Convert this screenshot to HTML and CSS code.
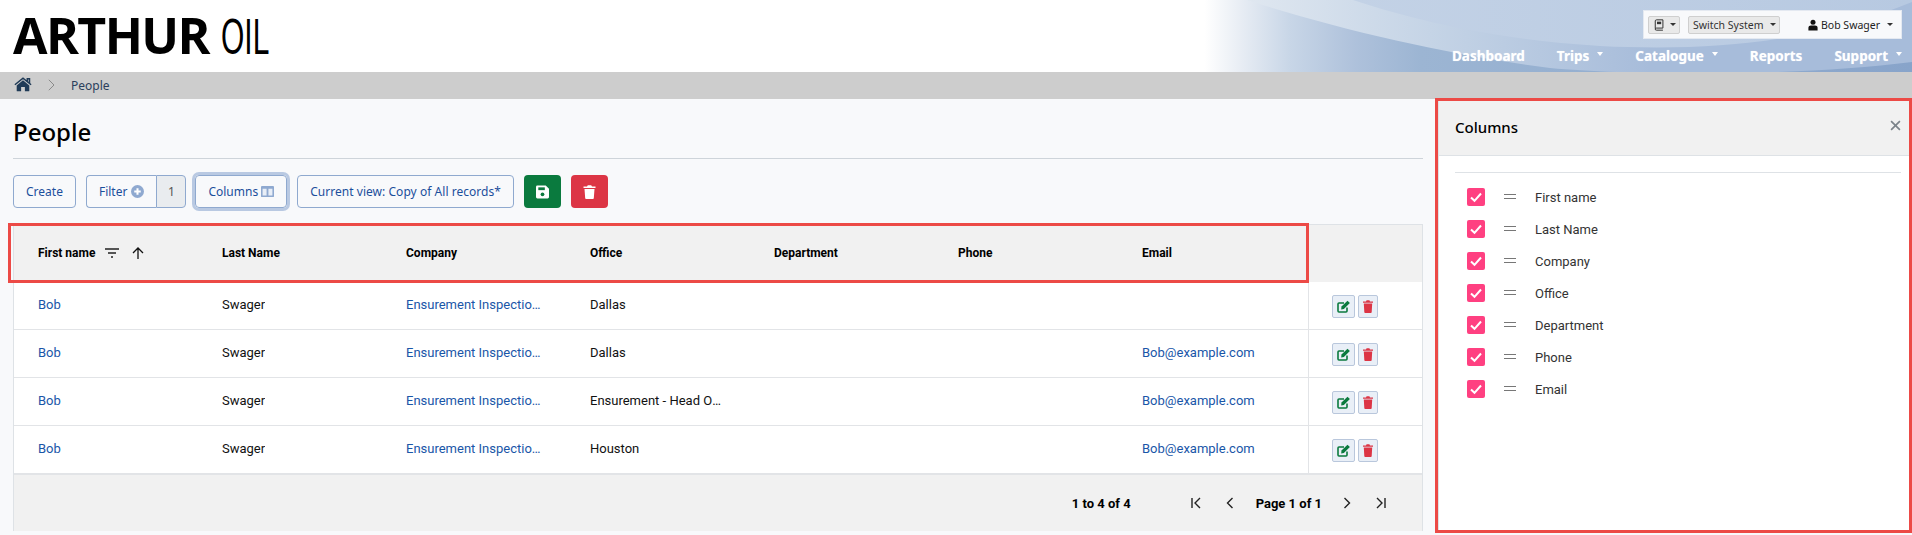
FILE: index.html
```html
<!DOCTYPE html>
<html lang="en">
<head>
<meta charset="utf-8">
<title>People</title>
<link rel="stylesheet" href="styles.css">
</head>
<body>
<header class="site-header">
  <svg class="header-art" viewBox="1190 0 722 72" preserveAspectRatio="none" aria-hidden="true">
    <defs>
      <linearGradient id="baseG" gradientUnits="userSpaceOnUse" x1="1190" y1="0" x2="1912" y2="0">
        <stop offset="0" stop-color="#fff" stop-opacity="0"/>
        <stop offset=".02" stop-color="#fff"/>
        <stop offset=".07" stop-color="#e8edf4"/>
        <stop offset=".138" stop-color="#c8d6e7"/>
        <stop offset=".23" stop-color="#aec1db"/>
        <stop offset=".32" stop-color="#9cb5d3"/>
        <stop offset="1" stop-color="#88a4ca"/>
      </linearGradient>
      <linearGradient id="bandG" gradientUnits="userSpaceOnUse" x1="1250" y1="0" x2="1650" y2="0">
        <stop offset="0" stop-color="#dfe7f0"/>
        <stop offset=".45" stop-color="#c5d4e6"/>
        <stop offset="1" stop-color="#a7bcda"/>
      </linearGradient>
      <linearGradient id="topG" gradientUnits="userSpaceOnUse" x1="1350" y1="0" x2="1912" y2="0">
        <stop offset="0" stop-color="#c3d2e6"/>
        <stop offset="1" stop-color="#b7c9e1"/>
      </linearGradient>
    </defs>
    <rect x="1190" y="0" width="722" height="72" fill="url(#baseG)"/>
    <path d="M1247 0C1340 30 1450 55 1550 68C1640 76 1800 76 1912 62V0Z" fill="url(#bandG)"/>
    <path d="M1353 0C1420 22 1500 40 1600 46C1720 52 1820 40 1912 2V0Z" fill="url(#topG)"/>
  </svg>
  <div class="logo"><span class="logo-bold">ARTHUR</span><span class="logo-light">OIL</span></div>
  <div class="header-right">
    <div class="util-box">
      <button class="util-btn util-book">
        <svg class="i-book" viewBox="0 0 12 14"><path d="M1.500 11.500V2A1.500 1.500 0 0 1 3 .8h7.700v9.900H3a1.400 1.400 0 0 0-1.500 1.200 1.300 1.300 0 0 0 1.500 1.300h7.700" fill="none" stroke="#333" stroke-width="1.200"/><rect x="3.600" y="3" width="5" height="3" fill="#333"/></svg>
        <span class="caret-dark"></span>
      </button>
      <button class="util-btn util-switch">Switch System<span class="caret-dark"></span></button>
      <div class="util-user">
        <svg class="i-user" viewBox="0 0 12 13"><circle cx="6" cy="3.300" r="3" fill="#111"/><path d="M.5 13V9.800C.5 8 2 7 3.500 7h5c1.500 0 3 1 3 2.800V13Z" fill="#111"/></svg>
        <span>Bob Swager</span><span class="caret-dark caret-user"></span>
      </div>
    </div>
    <nav class="main-nav">
      <a>Dashboard</a>
      <a>Trips<span class="caret-light"></span></a>
      <a>Catalogue<span class="caret-light"></span></a>
      <a>Reports</a>
      <a>Support<span class="caret-light"></span></a>
    </nav>
  </div>
</header>

<div class="crumbs">
  <svg class="i-home" viewBox="0 0 20 16"><path d="M10 3.300 3 9.100V15a.6.6 0 0 0 .6.6h4.300v-4.700h4.200v4.700h4.300a.6.6 0 0 0 .6-.6V9.100Z" fill="#1f3a56"/><path d="M1 8.300 10 1l9 7.300M14.800 4.500V1.600h2.400v4.900" fill="none" stroke="#1f3a56" stroke-width="1.700"/></svg>
  <svg class="i-sep" viewBox="0 0 7 12"><path d="M.8.800 6 6 .8 11.200" fill="none" stroke="#8a8a8a" stroke-width="1"/></svg>
  <span>People</span>
</div>

<div class="workspace">
  <main class="content">
    <h1 class="page-title">People</h1>
    <div class="toolbar">
      <button class="btn">Create</button>
      <div class="btn-group">
        <button class="btn btn-left">Filter
          <svg class="i-btn" viewBox="0 0 14 14"><circle cx="7" cy="7" r="7" fill="#8fa9d0"/><path d="M7 3.500v7M3.500 7h7" stroke="#fff" stroke-width="2.200"/></svg>
        </button>
        <span class="btn-count">1</span>
      </div>
      <button class="btn btn-focus">Columns
        <svg class="i-btn" viewBox="0 0 14 12"><path d="M1 0h12a1 1 0 0 1 1 1v10a1 1 0 0 1-1 1H1a1 1 0 0 1-1-1V1a1 1 0 0 1 1-1Z" fill="#8fa9d0"/><path d="M1.700 3h4.300v7.300H1.700zM8 3h4.300v7.300H8z" fill="#e8eef7"/></svg>
      </button>
      <button class="btn btn-view">Current view: Copy of All records*</button>
      <button class="btn btn-save" aria-label="Save">
        <svg class="i-solid" viewBox="0 0 14 14"><path d="M1.500 0h9L14 3.500v9a1.500 1.500 0 0 1-1.500 1.500h-11A1.500 1.500 0 0 1 0 12.500v-11A1.500 1.500 0 0 1 1.500 0Z" fill="#fff"/><rect x="2.500" y="2" width="7" height="3" fill="#0a7a3e"/><circle cx="7" cy="9.500" r="2" fill="#0a7a3e"/></svg>
      </button>
      <button class="btn btn-del" aria-label="Delete">
        <svg class="i-solid" viewBox="0 0 12 14"><path d="M0 1.500h3.500L4.300.2h3.400l.8 1.300H12V3H0ZM1 4h10l-.7 9.200a.9.9 0 0 1-.9.800H2.600a.9.9 0 0 1-.9-.8Z" fill="#fff"/></svg>
      </button>
    </div>

    <div class="grid">
      <div class="grid-row grid-head">
        <div class="cell cell-first">First name
          <svg class="i-filter" viewBox="0 0 14 10"><path d="M0 1h14M3 5h8M6 9h2" stroke="#222" stroke-width="1.500"/></svg>
          <svg class="i-arrow" viewBox="0 0 12 12"><path d="M6 12V1M1 6l5-5 5 5" fill="none" stroke="#111" stroke-width="1.300"/></svg>
        </div>
        <div class="cell">Last Name</div>
        <div class="cell">Company</div>
        <div class="cell">Office</div>
        <div class="cell">Department</div>
        <div class="cell">Phone</div>
        <div class="cell">Email</div>
        <div class="cell cell-actions"></div>
      </div>

      <div class="grid-row">
        <div class="cell"><a>Bob</a></div>
        <div class="cell"><span>Swager</span></div>
        <div class="cell"><a>Ensurement Inspections Ltd</a></div>
        <div class="cell"><span>Dallas</span></div>
        <div class="cell"></div>
        <div class="cell"></div>
        <div class="cell"></div>
        <div class="cell cell-actions">
          <button class="mini mini-edit" aria-label="Edit"><svg viewBox="0 0 14 13"><path d="M10 7.500V11a1 1 0 0 1-1 1H2a1 1 0 0 1-1-1V4a1 1 0 0 1 1-1h5" fill="none" stroke="#0a7a3e" stroke-width="1.600"/><path d="M4.500 6.500 10.500.8l2.400 2.300-6 5.900-2.700.4Z" fill="#0a7a3e"/></svg></button>
          <button class="mini mini-del" aria-label="Delete"><svg viewBox="0 0 10 13"><path d="M0 1.500h3L3.600.3h2.800L7 1.500h3v1.300H0ZM.8 3.600h8.400l-.5 8.500a.9.9 0 0 1-.9.900H2.200a.9.9 0 0 1-.9-.9Z" fill="#dc3545"/></svg></button>
        </div>
      </div>

      <div class="grid-row">
        <div class="cell"><a>Bob</a></div>
        <div class="cell"><span>Swager</span></div>
        <div class="cell"><a>Ensurement Inspections Ltd</a></div>
        <div class="cell"><span>Dallas</span></div>
        <div class="cell"></div>
        <div class="cell"></div>
        <div class="cell"><a>Bob@example.com</a></div>
        <div class="cell cell-actions">
          <button class="mini mini-edit" aria-label="Edit"><svg viewBox="0 0 14 13"><path d="M10 7.500V11a1 1 0 0 1-1 1H2a1 1 0 0 1-1-1V4a1 1 0 0 1 1-1h5" fill="none" stroke="#0a7a3e" stroke-width="1.600"/><path d="M4.500 6.500 10.500.8l2.400 2.300-6 5.900-2.700.4Z" fill="#0a7a3e"/></svg></button>
          <button class="mini mini-del" aria-label="Delete"><svg viewBox="0 0 10 13"><path d="M0 1.500h3L3.600.3h2.800L7 1.500h3v1.300H0ZM.8 3.600h8.400l-.5 8.500a.9.9 0 0 1-.9.900H2.200a.9.9 0 0 1-.9-.9Z" fill="#dc3545"/></svg></button>
        </div>
      </div>

      <div class="grid-row">
        <div class="cell"><a>Bob</a></div>
        <div class="cell"><span>Swager</span></div>
        <div class="cell"><a>Ensurement Inspections Ltd</a></div>
        <div class="cell"><span>Ensurement - Head Office</span></div>
        <div class="cell"></div>
        <div class="cell"></div>
        <div class="cell"><a>Bob@example.com</a></div>
        <div class="cell cell-actions">
          <button class="mini mini-edit" aria-label="Edit"><svg viewBox="0 0 14 13"><path d="M10 7.500V11a1 1 0 0 1-1 1H2a1 1 0 0 1-1-1V4a1 1 0 0 1 1-1h5" fill="none" stroke="#0a7a3e" stroke-width="1.600"/><path d="M4.500 6.500 10.500.8l2.400 2.300-6 5.900-2.700.4Z" fill="#0a7a3e"/></svg></button>
          <button class="mini mini-del" aria-label="Delete"><svg viewBox="0 0 10 13"><path d="M0 1.500h3L3.600.3h2.800L7 1.500h3v1.300H0ZM.8 3.600h8.400l-.5 8.500a.9.9 0 0 1-.9.900H2.200a.9.9 0 0 1-.9-.9Z" fill="#dc3545"/></svg></button>
        </div>
      </div>

      <div class="grid-row">
        <div class="cell"><a>Bob</a></div>
        <div class="cell"><span>Swager</span></div>
        <div class="cell"><a>Ensurement Inspections Ltd</a></div>
        <div class="cell"><span>Houston</span></div>
        <div class="cell"></div>
        <div class="cell"></div>
        <div class="cell"><a>Bob@example.com</a></div>
        <div class="cell cell-actions">
          <button class="mini mini-edit" aria-label="Edit"><svg viewBox="0 0 14 13"><path d="M10 7.500V11a1 1 0 0 1-1 1H2a1 1 0 0 1-1-1V4a1 1 0 0 1 1-1h5" fill="none" stroke="#0a7a3e" stroke-width="1.600"/><path d="M4.500 6.500 10.500.8l2.400 2.300-6 5.900-2.700.4Z" fill="#0a7a3e"/></svg></button>
          <button class="mini mini-del" aria-label="Delete"><svg viewBox="0 0 10 13"><path d="M0 1.500h3L3.600.3h2.800L7 1.500h3v1.300H0ZM.8 3.600h8.400l-.5 8.500a.9.9 0 0 1-.9.900H2.200a.9.9 0 0 1-.9-.9Z" fill="#dc3545"/></svg></button>
        </div>
      </div>

      <div class="grid-foot">
        <span class="foot-summary">1 to 4 of 4</span>
        <svg class="i-page" viewBox="0 0 10 12"><path d="M1 1v10M9 1 4 6l5 5" fill="none" stroke="#222" stroke-width="1.400"/></svg>
        <svg class="i-page" viewBox="0 0 10 12"><path d="M7.500 1 2.500 6l5 5" fill="none" stroke="#222" stroke-width="1.400"/></svg>
        <span class="foot-page">Page 1 of 1</span>
        <svg class="i-page" viewBox="0 0 10 12"><path d="M2.500 1l5 5-5 5" fill="none" stroke="#222" stroke-width="1.400"/></svg>
        <svg class="i-page" viewBox="0 0 10 12"><path d="M9 1v10M1 1l5 5-5 5" fill="none" stroke="#222" stroke-width="1.400"/></svg>
      </div>
      <div class="mark-head"></div>
    </div>
  </main>

  <aside class="panel">
    <div class="panel-head">
      <h2>Columns</h2>
      <svg class="i-close" viewBox="0 0 10 10"><path d="M1 1l8 8M9 1l-8 8" stroke="#7b838a" stroke-width="1.500"/></svg>
    </div>
    <div class="panel-body">
      <ul class="col-list">
        <li><span class="check"><svg viewBox="0 0 18 18"><path d="M4 9.500l3.500 3.300L14 5.500" fill="none" stroke="#fff" stroke-width="2"/></svg></span><span class="drag"></span>First name</li>
        <li><span class="check"><svg viewBox="0 0 18 18"><path d="M4 9.500l3.500 3.300L14 5.500" fill="none" stroke="#fff" stroke-width="2"/></svg></span><span class="drag"></span>Last Name</li>
        <li><span class="check"><svg viewBox="0 0 18 18"><path d="M4 9.500l3.500 3.300L14 5.500" fill="none" stroke="#fff" stroke-width="2"/></svg></span><span class="drag"></span>Company</li>
        <li><span class="check"><svg viewBox="0 0 18 18"><path d="M4 9.500l3.500 3.300L14 5.500" fill="none" stroke="#fff" stroke-width="2"/></svg></span><span class="drag"></span>Office</li>
        <li><span class="check"><svg viewBox="0 0 18 18"><path d="M4 9.500l3.500 3.300L14 5.500" fill="none" stroke="#fff" stroke-width="2"/></svg></span><span class="drag"></span>Department</li>
        <li><span class="check"><svg viewBox="0 0 18 18"><path d="M4 9.500l3.500 3.300L14 5.500" fill="none" stroke="#fff" stroke-width="2"/></svg></span><span class="drag"></span>Phone</li>
        <li><span class="check"><svg viewBox="0 0 18 18"><path d="M4 9.500l3.500 3.300L14 5.500" fill="none" stroke="#fff" stroke-width="2"/></svg></span><span class="drag"></span>Email</li>
      </ul>
    </div>
  </aside>
</div>
</body>
</html>
```
FILE: styles.css
```css
* { box-sizing: border-box; }
html, body { margin: 0; height: 535px; overflow: hidden; }
body { background: #f8f9fb; font-family: "Noto Sans", sans-serif; font-size: 12px; color: #212529; }
h1, h2, ul { margin: 0; padding: 0; }
button { font-family: inherit; }

.site-header { position: relative; height: 72px; background: #fff; display: flex; justify-content: space-between; }
.header-art { position: absolute; top: 0; right: 0; width: 722px; height: 72px; }
.logo { position: relative; padding-left: 13px; height: 72px; display: flex; align-items: baseline; line-height: 70px; color: #000; }
.logo-bold { font-family: "Open Sans", sans-serif; font-weight: 700; font-size: 50px; letter-spacing: -1.600px; }
.logo-light { display: inline-block; font-family: "Liberation Sans", sans-serif; font-size: 50px; margin-left: 12px; transform: scaleX(.6); transform-origin: left center; }

.header-right { position: relative; display: flex; flex-direction: column; align-items: flex-end; padding-right: 10px; }
.util-box { margin-top: 10px; width: 259px; height: 29px; background: #f8f9fb; border: 1px solid #e4e9f1; display: flex; align-items: center; padding-left: 4px; }
.util-btn { height: 18px; background: #e9e9e9; border: 1px solid #cfcfcf; border-radius: 2px; display: flex; align-items: center; padding: 0; font-size: 10.500px; color: #333; }
.util-book { width: 32px; justify-content: flex-start; padding-left: 5px; }
.i-book { width: 10px; height: 12px; }
.util-book .caret-dark { margin-left: 6px; }
.util-switch { width: 92px; margin-left: 8px; padding-left: 4px; }
.util-switch .caret-dark { margin-left: 7px; }
.util-user { display: flex; align-items: center; margin-left: 28px; font-size: 10.500px; color: #222; }
.i-user { width: 10px; height: 12px; margin-right: 3px; }
.caret-user { margin-left: 7px; }
.caret-dark { display: inline-block; border: 3px solid transparent; border-top: 3.500px solid #333; border-bottom: 0; }

.main-nav { height: 33px; display: flex; align-items: center; gap: 32px; }
.main-nav a { color: #fff; font-size: 13.500px; font-weight: 700; display: flex; align-items: center; text-shadow: 0 0 1px rgba(255,255,255,.6); }
.caret-light { display: inline-block; margin-left: 8px; margin-top: -3px; border: 3.500px solid transparent; border-top: 4px solid #fff; border-bottom: 0; }

.crumbs { height: 27px; background: #cdcdcd; display: flex; align-items: center; padding-left: 14px; color: #2b3f5c; }
.i-home { width: 18px; height: 15px; margin-top: -2px; }
.i-sep { width: 7px; height: 12px; margin-left: 16px; margin-top: -1px; }
.crumbs span { margin-left: 16px; }

.workspace { display: flex; height: 436px; }
.content { width: 1435px; padding: 0 12px 0 13px; }
.page-title { height: 60px; border-bottom: 1px solid #ced4da; font-size: 24px; font-weight: 500; line-height: 66px; color: #000; }

.toolbar { display: flex; height: 33px; margin-top: 16px; margin-bottom: 16px; gap: 10px; }
.btn { height: 33px; padding: 0 12px; border: 1px solid #8fa9cf; border-radius: 4px; background: transparent; color: #1c4f9c; font-size: 12px; display: flex; align-items: center; gap: 4px; white-space: nowrap; }
.btn-group { display: flex; }
.btn-left { border-radius: 4px 0 0 4px; border-right: 0; }
.btn-count { width: 30px; display: flex; align-items: center; justify-content: center; border: 1px solid #8fa9cf; border-radius: 0 4px 4px 0; background: #e9ecef; color: #555; }
.i-btn { width: 13px; height: 13px; }
.btn-focus { box-shadow: 0 0 0 3px #b9c9e2; gap: 3px; margin-left: -1px; }
.btn-view { letter-spacing: .04px; }
.btn-save, .btn-del { justify-content: center; border: 0; }
.btn-save { width: 37px; background: #0a7a3e; }
.btn-del { width: 37px; background: #dc3545; }
.i-solid { width: 13px; height: 14px; }

.grid { position: relative; width: 1410px; height: 307px; border: 1px solid #dee2e6; background: #fff; font-family: Roboto, sans-serif; font-size: 13px; color: #111; }
.grid-row { display: grid; grid-template-columns: repeat(6, 184px) 190px 1fr; height: 48px; border-bottom: 1px solid #e2e4e7; }
.grid-head { height: 57px; background: #f1f1f1; font-size: 12px; font-weight: 700; color: #000; border-bottom: 0; }
.cell { padding: 0 25px 2px 24px; display: flex; align-items: center; min-width: 0; white-space: nowrap; overflow: hidden; }
.grid-head .cell { padding-bottom: 1px; }
.cell a { color: #1a56a8; overflow: hidden; text-overflow: ellipsis; }
.cell span { overflow: hidden; text-overflow: ellipsis; }
.cell-first { overflow: visible; }
.cell-actions { padding: 1px 0 0 23px; border-left: 1px solid #e2e4e7; gap: 3px; }
.grid-head .cell-actions { border-left-color: #dee2e6; }
.i-filter { width: 14px; height: 10px; margin-left: 10px; flex: none; }
.i-arrow { width: 12px; height: 12px; margin-left: 13px; flex: none; }

.mini { height: 23px; padding: 0; display: flex; align-items: center; justify-content: center; background: #e9eff7; border: 1px solid #b9c7dc; border-radius: 2px; }
.mini-edit { width: 23px; }
.mini-del { width: 20px; }
.mini-edit svg { width: 14px; height: 13px; }
.mini-del svg { width: 10px; height: 13px; }

.grid-foot { height: 58px; margin-top: -1px; border-top: 2px solid #e2e4e7; background: #f1f1f1; display: flex; align-items: center; justify-content: flex-end; padding-right: 36px; font-weight: 700; color: #000; }
.foot-summary { margin-right: 60px; }
.foot-page { margin: 0 20px 0 21px; }
.i-page { width: 10px; height: 12px; flex: none; margin-left: 24px; }
.foot-summary + .i-page { margin-left: 0; }
.foot-page + .i-page { margin-left: 0; }

.mark-head { position: absolute; left: -6px; top: -2px; width: 1301px; height: 60px; border: 3px solid #ec4a46; pointer-events: none; }

.panel { margin-top: -1px; width: 477px; height: 435px; border: 3px solid #ec4a46; background: #fff; display: flex; flex-direction: column; }
.panel-head { height: 55px; flex: none; background: #f1f1f1; border-bottom: 1px solid #dee2e6; border-left: 1px solid #dee2e6; display: flex; align-items: center; justify-content: space-between; padding: 0 8px 2px 16px; }
.panel-head h2 { font-size: 15px; font-weight: 500; color: #000; }
.i-close { width: 11px; height: 11px; margin-top: -3px; }
.panel-body { flex: 1; padding: 16px 8px 0 16px; border-left: 1px solid #dee2e6; }
.col-list { list-style: none; border-top: 1px solid #dee2e6; padding: 15px 0 0 12px; font-family: Roboto, sans-serif; font-size: 13px; color: #333; }
.col-list li { height: 32px; display: flex; align-items: flex-start; line-height: 19px; }
.check { width: 18px; height: 18px; border-radius: 2px; background: #ff4081; flex: none; }
.check svg { display: block; width: 18px; height: 18px; }
.drag { width: 12px; height: 5px; margin: 6px 19px 0 19px; border-top: 1px solid #777; border-bottom: 1px solid #777; flex: none; }
```
